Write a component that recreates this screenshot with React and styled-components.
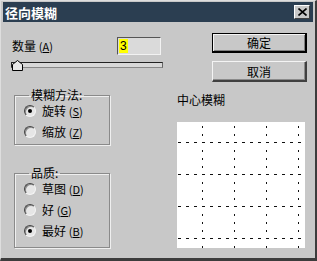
import React from 'react';
import styled, { createGlobalStyle } from 'styled-components';

const Global = createGlobalStyle`
  html, body { margin: 0; padding: 0; background: #c8c8c8; }
  * { box-sizing: border-box; }
`;

const FONT = `"Noto Sans CJK SC", "Liberation Sans", sans-serif`;

function Mn({ text, k }) {
  return (
    <>
      {text} <Key>(<u>{k}</u>)</Key>
    </>
  );
}

function Radio({ checked, label, k }) {
  return (
    <RadioRow>
      <RadioDot checked={checked} />
      <span><Mn text={label} k={k} /></span>
    </RadioRow>
  );
}

function Preview() {
  const cols = [25, 57, 89, 121];
  const rows = [20, 52, 84, 116];
  const marks = [];
  rows.forEach((y, i) => {
    for (let x = 1; x < 128; x += 8) {
      marks.push(<rect key={`h${i}-${x}`} x={x} y={y} width="3" height="1" fill="#111" />);
    }
  });
  cols.forEach((x, i) => {
    for (let y = 4; y < 126; y += 8) {
      if (rows.some(r => Math.abs(r - y) < 3)) continue;
      marks.push(<rect key={`v${i}-${y}`} x={x} y={y} width="1" height="2" fill="#111" />);
    }
  });
  return (
    <PreviewBox>
      <svg width="128" height="126" viewBox="0 0 128 126">{marks}</svg>
    </PreviewBox>
  );
}

export default function App() {
  return (
    <>
      <Global />
      <Window>
        <TitleBar>
          <Title>径向模糊</Title>
          <CloseBtn>
            <svg width="9" height="8" viewBox="0 0 9 8">
              <path d="M0.5 0.5 L8.5 7.5 M8.5 0.5 L0.5 7.5" stroke="#000" strokeWidth="1.6" />
            </svg>
          </CloseBtn>
        </TitleBar>
        <Body>
          <LeftCol>
            <AmountRow>
              <Label><Mn text="数量" k="A" /></Label>
              <NumberBox><Sel>3</Sel></NumberBox>
            </AmountRow>
            <Track>
              <Thumb>
                <svg width="11" height="11" viewBox="0 0 11 11">
                  <path d="M0.5 10.5 V4.5 L5.5 0.5 L10.5 4.5 V10.5 Z" fill="#e8e8e8" stroke="#000" />
                </svg>
              </Thumb>
            </Track>
            <Group top={21} rows={[0, 21]} bottom={6}>
              <Legend>模糊方法:</Legend>
              <Radio checked label="旋转" k="S" />
              <Radio label="缩放" k="Z" />
            </Group>
            <Group top={22} bottom={10}>
              <Legend>品质:</Legend>
              <Radio label="草图" k="D" />
              <Radio label="好" k="G" />
              <Radio checked label="最好" k="B" />
            </Group>
          </LeftCol>
          <RightCol>
            <Button primary>确定</Button>
            <Button>取消</Button>
            <PreviewLabel>中心模糊</PreviewLabel>
            <Preview />
          </RightCol>
        </Body>
      </Window>
    </>
  );
}

const Window = styled.div`
  width: 317px;
  height: 261px;
  background: #c8c8c8;
  border-top: 1px solid #dedede;
  border-left: 1px solid #dedede;
  border-right: 2px solid #3c3c3c;
  border-bottom: 3px solid #3c3c3c;
  padding: 1px 2px 0 2px;
  font-family: ${FONT};
  font-size: 12px;
  color: #000;
  overflow: hidden;
`;

const TitleBar = styled.div`
  height: 20px;
  background: #2b3e51;
  display: flex;
  align-items: center;
  justify-content: space-between;
  padding: 0 3px 0 2px;
`;

const Title = styled.div`
  color: #fff;
  font-weight: 700;
  font-size: 13px;
  letter-spacing: 0px;
  line-height: 1;
`;

const CloseBtn = styled.div`
  width: 16px;
  height: 14px;
  background: #c8c8c8;
  border-top: 1px solid #fff;
  border-left: 1px solid #fff;
  border-right: 1px solid #404040;
  border-bottom: 1px solid #404040;
  display: flex;
  align-items: center;
  justify-content: center;
`;

const Body = styled.div`
  display: flex;
`;

const LeftCol = styled.div`
  width: 153px;
  margin-left: 8px;
  display: flex;
  flex-direction: column;
`;

const AmountRow = styled.div`
  display: flex;
  align-items: center;
  justify-content: space-between;
  margin-top: 15px;
  height: 18px;
  padding-right: 3px;
`;

const Label = styled.span`
  margin-left: 1px;
  line-height: 14px;
`;

const Key = styled.span`
  font-size: 11px;
`;

const NumberBox = styled.div`
  width: 44px;
  height: 18px;
  background: #dadada;
  border-top: 1px solid #555;
  border-left: 1px solid #555;
  border-right: 1px solid #f2f2f2;
  border-bottom: 1px solid #f2f2f2;
  padding: 1px 0 0 1px;
  display: flex;
  align-items: flex-start;
`;

const Sel = styled.span`
  background: #ffff00;
  color: #000;
  font-family: "Liberation Sans", sans-serif;
  font-size: 12px;
  line-height: 14px;
  padding: 0 1px;
`;

const Track = styled.div`
  position: relative;
  margin-top: 7px;
  height: 6px;
  width: 152px;
  background: #d8d8d8;
  border: 1px solid #222;
  border-right-color: #666;
  border-bottom-color: #888;
`;

const Thumb = styled.div`
  position: absolute;
  left: 0px;
  top: -3px;
  width: 11px;
  height: 11px;
  line-height: 0;
`;

const Group = styled.fieldset`
  margin: ${p => p.top}px 0 0 3px;
  width: 96px;
  padding: 3px 0 ${p => p.bottom}px 9px;
  border: 1px solid #8a8a8a;
  box-shadow: inset 1px 1px 0 #efefef, 1px 1px 0 #efefef;
  display: flex;
  flex-direction: column;
  gap: 8px;
`;

const Legend = styled.legend`
  padding: 0 2px;
  margin-left: 5px;
  line-height: 12px;
  font-size: 12px;
`;

const RadioRow = styled.div`
  display: flex;
  align-items: center;
  gap: 6px;
  height: 13px;
`;

const RadioDot = styled.span`
  width: 12px;
  height: 12px;
  border-radius: 50%;
  background: #e6e6e6;
  border: 1px solid;
  border-color: #444 #f4f4f4 #f4f4f4 #444;
  box-shadow: inset 1px 1px 0 #8a8a8a;
  display: flex;
  align-items: center;
  justify-content: center;
  &::after {
    content: '';
    width: 4px;
    height: 4px;
    border-radius: 50%;
    background: ${p => (p.checked ? '#000' : 'transparent')};
  }
`;

const RightCol = styled.div`
  margin-left: 13px;
  width: 130px;
  display: flex;
  flex-direction: column;
`;

const Button = styled.div`
  width: 95px;
  height: ${p => (p.primary ? 20 : 21)}px;
  margin-left: 35px;
  margin-top: ${p => (p.primary ? 11 : 8)}px;
  background: #c8c8c8;
  display: flex;
  align-items: center;
  justify-content: center;
  font-size: 12px;
  border-top: 1px solid ${p => (p.primary ? '#000' : '#f4f4f4')};
  border-left: 1px solid ${p => (p.primary ? '#000' : '#f4f4f4')};
  border-right: ${p => (p.primary ? 2 : 2)}px solid ${p => (p.primary ? '#000' : '#404040')};
  border-bottom: 2px solid ${p => (p.primary ? '#000' : '#404040')};
  box-shadow: ${p => (p.primary ? 'inset 1px 1px 0 #f4f4f4, inset -1px -1px 0 #808080' : 'inset -1px -1px 0 #8a8a8a')};
`;

const PreviewLabel = styled.div`
  margin-top: 11px;
  line-height: 14px;
`;

const PreviewBox = styled.div`
  margin-top: 15px;
  width: 128px;
  height: 126px;
  background: #fff;
  line-height: 0;
`;
